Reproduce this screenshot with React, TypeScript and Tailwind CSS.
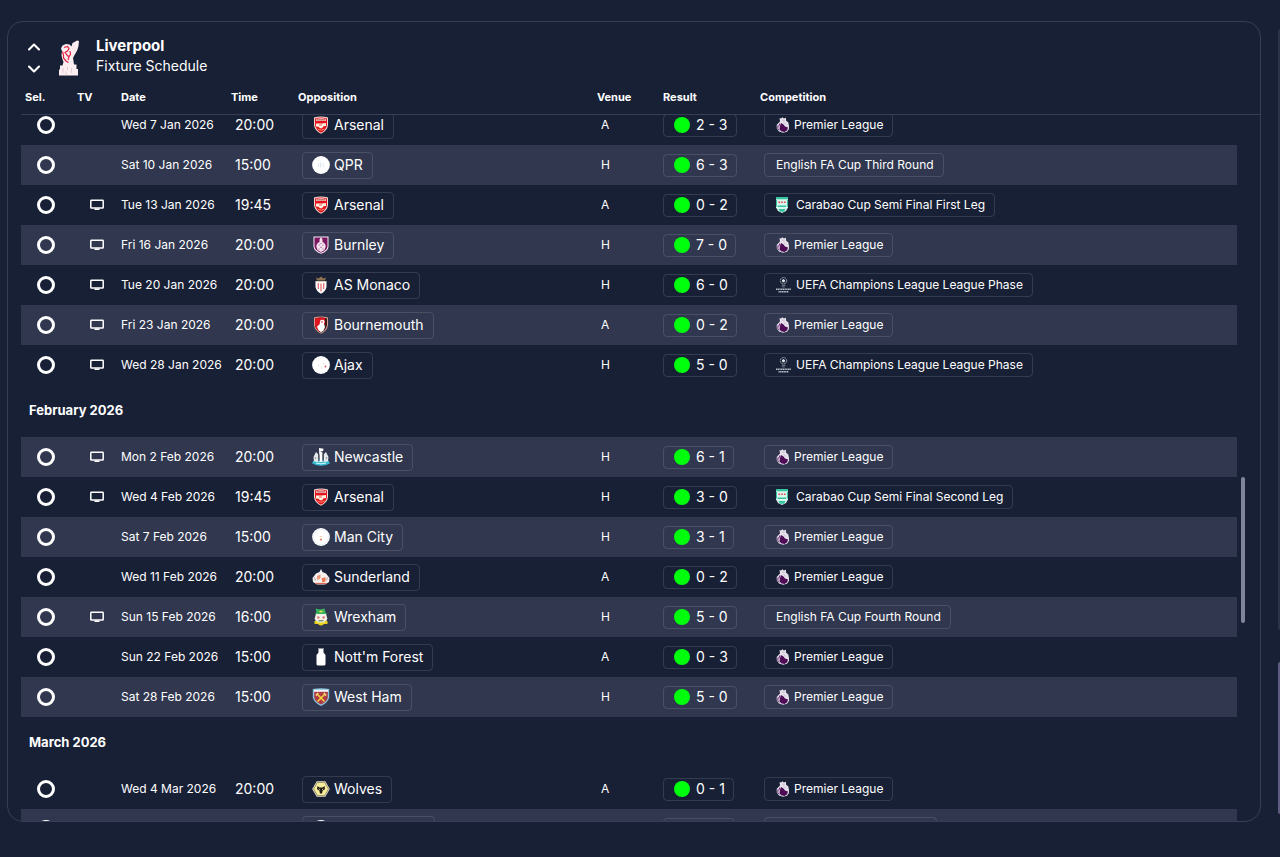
import { Fragment, useLayoutEffect, useRef, useState } from 'react';
import type { ReactNode } from 'react';
import { ChevronDown, ChevronUp } from 'lucide-react';
import clsx from 'clsx';

type Fixture = {
  date: string;
  time: string;
  team: string;
  venue: 'H' | 'A';
  result: string;
  comp: string;
  tv?: boolean;
};

type Month = { title: string; striped: number; fixtures: Fixture[] };

const PL = 'Premier League';
const UCL = 'UEFA Champions League League Phase';

// striped: parity of the rows that get the lighter background
const MONTHS: Month[] = [
  {
    title: 'January 2026',
    striped: 1,
    fixtures: [
      { date: 'Wed 7 Jan 2026', time: '20:00', team: 'Arsenal', venue: 'A', result: '2 - 3', comp: PL },
      { date: 'Sat 10 Jan 2026', time: '15:00', team: 'QPR', venue: 'H', result: '6 - 3', comp: 'English FA Cup Third Round' },
      { date: 'Tue 13 Jan 2026', time: '19:45', team: 'Arsenal', venue: 'A', result: '0 - 2', comp: 'Carabao Cup Semi Final First Leg', tv: true },
      { date: 'Fri 16 Jan 2026', time: '20:00', team: 'Burnley', venue: 'H', result: '7 - 0', comp: PL, tv: true },
      { date: 'Tue 20 Jan 2026', time: '20:00', team: 'AS Monaco', venue: 'H', result: '6 - 0', comp: UCL, tv: true },
      { date: 'Fri 23 Jan 2026', time: '20:00', team: 'Bournemouth', venue: 'A', result: '0 - 2', comp: PL, tv: true },
      { date: 'Wed 28 Jan 2026', time: '20:00', team: 'Ajax', venue: 'H', result: '5 - 0', comp: UCL, tv: true },
    ],
  },
  {
    title: 'February 2026',
    striped: 0,
    fixtures: [
      { date: 'Mon 2 Feb 2026', time: '20:00', team: 'Newcastle', venue: 'H', result: '6 - 1', comp: PL, tv: true },
      { date: 'Wed 4 Feb 2026', time: '19:45', team: 'Arsenal', venue: 'H', result: '3 - 0', comp: 'Carabao Cup Semi Final Second Leg', tv: true },
      { date: 'Sat 7 Feb 2026', time: '15:00', team: 'Man City', venue: 'H', result: '3 - 1', comp: PL },
      { date: 'Wed 11 Feb 2026', time: '20:00', team: 'Sunderland', venue: 'A', result: '0 - 2', comp: PL },
      { date: 'Sun 15 Feb 2026', time: '16:00', team: 'Wrexham', venue: 'H', result: '5 - 0', comp: 'English FA Cup Fourth Round', tv: true },
      { date: 'Sun 22 Feb 2026', time: '15:00', team: "Nott'm Forest", venue: 'A', result: '0 - 3', comp: PL },
      { date: 'Sat 28 Feb 2026', time: '15:00', team: 'West Ham', venue: 'H', result: '5 - 0', comp: PL },
    ],
  },
  {
    title: 'March 2026',
    striped: 1,
    fixtures: [
      { date: 'Wed 4 Mar 2026', time: '20:00', team: 'Wolves', venue: 'A', result: '0 - 1', comp: PL },
    ],
  },
];

const SHIELD = 'M2 1.500Q9 -.5 16 1.500V9Q15.5 14.500 9 17.800Q2.500 14.500 2 9Z';
const SHIELD_INNER = 'M3 2.400Q9 .8 15 2.400V9Q14.500 13.800 9 16.700Q3.500 13.800 3 9Z';

const CRESTS: Record<string, ReactNode> = {
  Arsenal: (
    <>
      <path d={SHIELD} fill="#f5d9d3" />
      <path d={SHIELD_INNER} fill="#e5141c" />
      <path d="M4 2.900Q9 1.700 14 2.900V5H4Z" fill="#fbe9e4" />
      <path d="M4.500 3.900h9" stroke="#b5333a" strokeWidth="1" />
      <path d="M4 7.500h6l4-.6v3l-2.500.4L10 12.300H8L6.500 10.700 4 10.500Z" fill="#fff1df" />
      <path d="M7 9h3" stroke="#e5141c" strokeWidth=".7" />
      <path d="M5.500 13q3.500 2.400 7 0" stroke="#f7d0a0" strokeWidth=".6" fill="none" />
    </>
  ),
  QPR: (
    <>
      <circle cx="9" cy="9" r="8.900" fill="#fff" />
      <path d="M6.500 7v4M8.500 6.500v5M11.500 7q-1.500 2 0 4" stroke="#d3deef" strokeWidth=".8" fill="none" />
    </>
  ),
  Burnley: (
    <>
      <path d="M1.500 .5h15v10q-.5 5-7.500 7.300Q2 15.500 1.500 10.500Z" fill="#f7edf3" />
      <path d="M2.500 1.500h13v9q-.5 4-6.500 6.300Q3 14.500 2.500 10.500Z" fill="#7b1660" />
      <path d="M9 1 10.500 3.500v2.500q3 1 3.200 4.500L12.500 14 9 16 5.500 14 4.300 10.500Q4.500 7 7.500 6V3.500Z" fill="#f4e3ee" />
      <path d="M6.500 9h1.200M10.300 9h1.200M8.300 11.300h1.500M6.500 13h1M10.500 13h1M9 7v1" stroke="#a05a90" strokeWidth="1" />
    </>
  ),
  'AS Monaco': (
    <>
      <path d="M5 4.500 4 1.500l2.500 1L9 .5l2.500 2 2.500-1-1 3Z" fill="#8d7250" />
      <path d="M3.500 5.500h11V11Q13.500 15.500 9 17.800 4.500 15.500 3.500 11Z" fill="#fff" />
      <path d="M6.300 7v6M9 7.500v8M11.700 7v6" stroke="#e8686c" strokeWidth="1.200" />
      <path d="M3.500 5.500h11" stroke="#d8c9b4" strokeWidth="1" />
    </>
  ),
  Bournemouth: (
    <>
      <path d={SHIELD} fill="#d7a08d" />
      <path d={SHIELD_INNER} fill="#3d1a1d" />
      <path d="M3 2.400Q9 .8 13 1.900V8L7 15.600Q3.500 13.300 3 9Z" fill="#dd1622" />
      <path d="M8.500 4q3-.8 4.200 1.200l-.8 2.500L13 11l-1.500 3.500L9 16.300 6.300 14 5 10.500 7.500 8.500Z" fill="#fff" />
      <circle cx="10" cy="6" r=".8" fill="#dd1622" />
    </>
  ),
  Ajax: (
    <>
      <circle cx="9" cy="9" r="8.900" fill="#fff" />
      <path d="M6 9.500h1M11 7.500h1M9 12h1" stroke="#f1c7cc" strokeWidth="1" />
      <circle cx="13.500" cy="10.500" r=".9" fill="#d4505c" />
    </>
  ),
  Newcastle: (
    <>
      <path d="M1 13q8-3.500 16 0l.8 2.500Q9 20 .2 15.500Z" fill="#35bcd0" />
      <path d="M2 13.500 1.500 9 4 4l2.500 2.500V14ZM16 13.500l.5-4.500L14 4l-2.500 2.500V14Z" fill="#e6e9ec" />
      <path d="M7 0l4.500.8-.5 2.500H8.200l2.300 1.500V14h-3Z" fill="#fff" />
      <path d="M6.900 6v7M11.100 6v7" stroke="#23283a" strokeWidth=".9" />
      <path d="M3 9l1 2M15 9l-1 2" stroke="#7a8593" strokeWidth=".9" />
      <path d="M4 15q5 1.800 10 0" stroke="#dff7fa" strokeWidth="1" fill="none" />
    </>
  ),
  'Man City': (
    <>
      <circle cx="9" cy="9" r="8.900" fill="#fff" />
      <circle cx="9" cy="9" r="7.600" fill="none" stroke="#dce9f5" strokeWidth=".6" />
      <path d="M9 10.500l1 .8-1 1.700-1-1.700Z" fill="#e0523f" />
      <path d="M7.500 8.500h3" stroke="#f2cda4" strokeWidth=".8" />
    </>
  ),
  Sunderland: (
    <>
      <path d="M9 1 10.500 4 14 5.500 17.500 10l-.5 4L13 16.500H5L1 14 .5 10 4 5.500 7.500 4Z" fill="#f6f1ee" />
      <path d="M5 8 8.500 6.500v3.500L5.500 12.500Z" fill="#ea9676" />
      <path d="M9.500 10.500 13.500 9v4.500l-3 1Z" fill="#ea7650" />
      <path d="M3.500 15.500h11" stroke="#d8695a" strokeWidth="1.300" />
      <path d="M2.500 9.500l1 3M15.500 9.500l-1 3" stroke="#9a8f90" strokeWidth=".8" />
    </>
  ),
  Wrexham: (
    <>
      <path d="M3.500 .5 8 1.500l4.500-1 1 3.500 1.500 2.500H3L4.300 4Z" fill="#39b15c" />
      <path d="M4 6h10l1.300 4.500L13.500 15h-9l-1.800-4.500Z" fill="#f4f2e6" />
      <circle cx="6.300" cy="9.500" r="1.200" fill="#d9787c" />
      <circle cx="11.700" cy="9.500" r="1.200" fill="#d9787c" />
      <path d="M2.500 13h3v1.500h7V13h3v3H12q-3 3-6 0H2.500Z" fill="#e6d21f" />
      <path d="M7.500 3.500h3" stroke="#f0e24a" strokeWidth="1.500" />
      <path d="M6.500 12.800h5" stroke="#3a5a34" strokeWidth=".9" />
    </>
  ),
  "Nott'm Forest": (
    <path d="M6.500 0 8 .8 9 .2l1 .6L11.500 0v4.500L13.500 7v9.500l-1 1H5.500l-1-1V7l2-2.500Z" fill="#fff" />
  ),
  'West Ham': (
    <>
      <path d="M.8 1Q9 -.3 17.200 1V9.500Q16 15 9 17.900 2 15 .8 9.500Z" fill="#8cc4e0" />
      <path d="M2.200 3H15.800V9.500Q14.800 13.800 9 16.500 3.200 13.800 2.200 9.500Z" fill="#b03a45" />
      <path d="M2 1.800h14v2H2Z" fill="#f3f5f7" />
      <path d="M5 6 12.500 13.500M13 6 5.500 13.500" stroke="#f3cf3c" strokeWidth="1.700" />
      <path d="M3.800 7.500l2.400-2.400M14.200 7.500l-2.400-2.400" stroke="#f9e38a" strokeWidth="1.400" />
    </>
  ),
  Wolves: (
    <>
      <path d="M4.700 1.200h8.600L17.800 9l-4.500 7.800H4.700L.2 9Z" fill="#e9e3c6" />
      <path d="M5.200 2h7.600L16.900 9l-4.100 7H5.200L1.100 9Z" fill="#8c8668" />
      <path d="M5.600 2.700h6.800L16 9l-3.600 6.300H5.600L2 9Z" fill="#f7ec9a" />
      <path d="M5.500 6 7.500 7.500h3L12.500 6l.5 3.200-2.300 1.300-.7 3H8l-.7-3L5 9.200Z" fill="#201c18" />
      <path d="M6.800 8.800l1.200 1M11.200 8.800 10 9.800" stroke="#f4e79a" strokeWidth=".8" />
    </>
  ),
};

function Crest({ team }: { team: string }) {
  return (
    <svg width="18" height="18" viewBox="0 0 18 18" aria-hidden="true" className="shrink-0">
      {CRESTS[team]}
    </svg>
  );
}

function LiverBird() {
  return (
    <svg width="22" height="36" viewBox="0 0 22 36" aria-hidden="true" className="shrink-0">
      <path
        d="M19 .5 21 1 20.500 6 19.500 9.500 18 12.500 16.500 15 15 18 15.500 21 16 24.500H18.500V29H20V35.500H1V29.500H2V25.500H4.500L5.500 22 4.500 19.500 3.500 15.500 4 11 3 8.500 4.500 5.500 8 4 11.500 4.500 13.500 6.500 14.500 3 16.500 2Z"
        fill="#fdeef1"
      />
      <path
        d="M6 7.500 9.500 6.500l1.500 2-1.500 2.500-2.500 1.500 2 2.500 2 2-1 3M4.500 11.500l1 3.500 0 3 2.500 3 2.500 1.500M12 11l.5 3.500-1.500 2"
        stroke="#e3203f"
        strokeWidth="1.200"
        fill="none"
      />
      <path d="M16.500 5 14 10M18.500 8l-3.500 4" stroke="#f8dde3" strokeWidth=".8" />
      <path d="M5 28v5M9.500 27v3M13.500 28v5M8 31.500v3" stroke="#d9c6d0" strokeWidth=".8" />
    </svg>
  );
}

function CompIcon({ comp }: { comp: string }) {
  if (comp.startsWith('Premier')) {
    return (
      <svg width="14" height="16" viewBox="0 0 14 16" aria-hidden="true" className="shrink-0">
        <path
          d="M3.500 1 5 1.600 6.500.2 7.800 1.600 10 .8 10 3.500l2.300 2L13 9v3l-2 2.800-4 1L3 14.500.8 11.500.7 8 2.500 6 4 4.500Z"
          fill="#e6e0ea"
        />
        <path d="M5 6 7.500 7.500 9 9.500l3 1-.8 2.700L8.500 15 5 14.200 3.500 12 4 9Z" fill="#4d0a55" />
        <path d="M2 8.500 1.800 11.500 3.500 13.300M3.800 6.500 2.800 9.500" stroke="#6b2a74" strokeWidth="1" fill="none" />
        <path d="M6 3.300h2.500M7.500 5.500l2 1.500" stroke="#b9aec2" strokeWidth=".7" />
      </svg>
    );
  }
  if (comp.startsWith('Carabao')) {
    return (
      <svg width="16" height="16" viewBox="0 0 16 16" aria-hidden="true" className="shrink-0">
        <path d="M0 0h12v10.500L10 14 6 16 2 14 0 10.500Z" fill="#d9f5ec" />
        <path d="M0 0h12v2.300H0ZM1.500 8.500h9l-.5 1.500H2ZM0 3h1v7L0 9.500ZM11 3h1v6.500l-1 .5ZM2.500 12h7L8 14.800H4Z" fill="#36c3a0" />
        <path d="M2.300 5.300h1.800M5.100 5.300h1.700M7.900 5.300h1.800" stroke="#e2525a" strokeWidth="1.500" />
      </svg>
    );
  }
  if (comp.startsWith('UEFA')) {
    return (
      <svg width="16" height="16" viewBox="0 0 16 16" aria-hidden="true" className="shrink-0">
        <circle cx="7.500" cy="3.700" r="3.200" fill="none" stroke="#aab1c0" strokeWidth=".9" strokeDasharray="2 .6" />
        <path d="M7.500 2 9.100 3.300 8.500 5.200H6.500L5.900 3.300Z" fill="#e3e6ec" />
        <path d="M5.500 8.300h4M6.200 9.900h2.600" stroke="#8d95a6" strokeWidth=".8" />
        <path d="M0 12.200h15" stroke="#b9bfcb" strokeWidth="1.600" strokeDasharray="1.300 .4" fill="none" />
        <path d="M2.500 14.700h10" stroke="#b9bfcb" strokeWidth="1.600" strokeDasharray="1.300 .4" fill="none" />
      </svg>
    );
  }
  return null;
}

function TvIcon() {
  return (
    <svg width="14" height="12" viewBox="0 0 14 12" role="img" aria-label="Televised" className="mx-auto">
      <rect x=".8" y="1.300" width="12.400" height="7.700" rx=".6" fill="none" stroke="#fff" strokeWidth="1.500" />
      <path d="M4.500 9.500h5v1.500h-5Z" fill="#fff" />
    </svg>
  );
}

function Chip({ children, className }: { children?: ReactNode; className?: string }) {
  return (
    <span className={clsx('flex w-fit items-center rounded border border-white/12', className)}>{children}</span>
  );
}

const ROW_STRIPE = '[&>td:not(:last-child)]:bg-[#30374f]';
const RADIO = 'block size-[18px] appearance-none rounded-full border-3 border-white checked:bg-white';

export default function App() {
  const [selected, setSelected] = useState('');
  const scrollRef = useRef<HTMLDivElement | null>(null);

  // Open part-way through the first visible fixture
  useLayoutEffect(() => {
    if (scrollRef.current) scrollRef.current.scrollTop = 10;
  }, []);

  return (
    <div className="h-screen overflow-hidden bg-[#182036] pt-[21px] pb-[35px] pl-[7px] flex gap-[17px] text-white font-['Inter',sans-serif]">
      <section className="relative flex-1 min-w-0 flex flex-col overflow-hidden rounded-2xl border border-[#363d55]">
        {/* Team header */}
        <header className="flex items-center pt-[14px] pl-4 h-[57px]">
          <div className="flex flex-col gap-[2px]">
            <button type="button" aria-label="Previous team">
              <ChevronUp size={20} strokeWidth={2.5} />
            </button>
            <button type="button" aria-label="Next team">
              <ChevronDown size={20} strokeWidth={2.5} />
            </button>
          </div>
          <div className="ml-[14px]">
            <LiverBird />
          </div>
          <div className="ml-4 pb-1">
            <h1 className="text-[15px] leading-5 font-bold">Liverpool</h1>
            <p className="text-sm leading-5">Fixture Schedule</p>
          </div>
        </header>

        {/* Fixtures */}
        <div ref={scrollRef} className="flex-1 min-h-0 pl-[13px] overflow-y-auto [scrollbar-width:none]">
          <table className="w-full table-fixed border-separate border-spacing-0 text-left whitespace-nowrap">
            <colgroup>
              <col className="w-[52px]" />
              <col className="w-[48px]" />
              <col className="w-[110px]" />
              <col className="w-[67px]" />
              <col className="w-[299px]" />
              <col className="w-[66px]" />
              <col className="w-[97px]" />
              <col />
              <col className="w-[23px]" />
            </colgroup>
            <thead className="sticky top-0 z-10 bg-[#182036] text-[11px] leading-4">
              <tr className="h-9 [&>*]:border-b [&>*]:border-[#363d55] [&>th]:font-bold">
                <th scope="col" className="pl-1">Sel.</th>
                <th scope="col" className="pl-1">TV</th>
                <th scope="col">Date</th>
                <th scope="col">Time</th>
                <th scope="col">Opposition</th>
                <th scope="col">Venue</th>
                <th scope="col">Result</th>
                <th scope="col">Competition</th>
                <td />
              </tr>
            </thead>
            <tbody>
              {MONTHS.map((month, m) => (
                <Fragment key={month.title}>
                  {m > 0 && (
                    <tr className="h-[52px]">
                      <th scope="rowgroup" colSpan={9} className="pl-2 text-[13px] font-bold">
                        {month.title}
                      </th>
                    </tr>
                  )}
                  {month.fixtures.map((f, i) => (
                    <tr key={f.date} className={clsx('h-10', i % 2 === month.striped && ROW_STRIPE)}>
                      <td className="pl-4">
                        <input
                          type="radio"
                          name="fixture"
                          aria-label={`Select ${f.team}, ${f.date}`}
                          checked={selected === f.date}
                          onChange={() => setSelected(f.date)}
                          className={RADIO}
                        />
                      </td>
                      <td>{f.tv && <TvIcon />}</td>
                      <td className="text-xs">{f.date}</td>
                      <td className="pl-1 text-sm">{f.time}</td>
                      <td className="pl-1">
                        <Chip className="h-[27px] gap-1 px-[9px] text-sm">
                          <Crest team={f.team} />
                          {f.team}
                        </Chip>
                      </td>
                      <td className="pl-1 text-xs">{f.venue}</td>
                      <td>
                        <Chip className="h-[23px] gap-[6px] pl-[10px] pr-2 text-sm">
                          <span className="size-4 rounded-full bg-[#00ff0d]" />
                          {f.result}
                        </Chip>
                      </td>
                      <td className="pl-1">
                        <Chip className="h-6 gap-1 pl-[11px] pr-[9px] text-xs">
                          <CompIcon comp={f.comp} />
                          {f.comp}
                        </Chip>
                      </td>
                      <td />
                    </tr>
                  ))}
                </Fragment>
              ))}
              {/* Next fixture, still loading below the fold */}
              <tr className={clsx('h-10', ROW_STRIPE)}>
                <td className="pl-4">
                  <input type="radio" name="fixture" aria-label="Select next fixture" className={RADIO} />
                </td>
                <td />
                <td />
                <td />
                <td className="pl-1">
                  <Chip className="h-[27px] min-w-[133px] px-[9px]">
                    <span className="size-[18px] rounded-full bg-white" />
                  </Chip>
                </td>
                <td />
                <td>
                  <Chip className="h-[23px] min-w-[72px]" />
                </td>
                <td className="pl-1">
                  <Chip className="h-6 min-w-[173px]" />
                </td>
                <td />
              </tr>
            </tbody>
          </table>
        </div>

        {/* Scroll thumb */}
        <div className="absolute right-[15px] top-[57%] h-[146px] w-1 rounded-full bg-[#80859a]" />
      </section>

      {/* Neighbouring panel */}
      <aside className="w-[2px] shrink-0 flex flex-col">
        <div className="mt-2 h-[75%] rounded-l bg-[#2b3249]" />
        <div className="mt-8 flex-1 mb-2 rounded-l bg-[#5f5b80]" />
      </aside>
    </div>
  );
}
